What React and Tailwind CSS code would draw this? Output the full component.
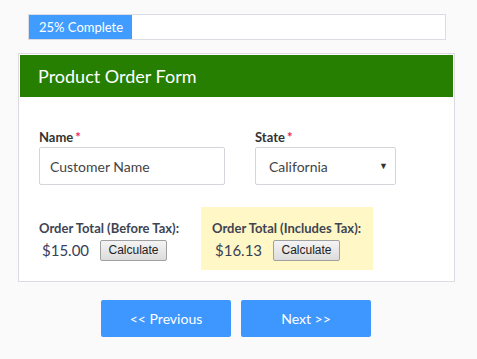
export default function App() {
  const lato = { fontFamily: 'Lato, "Open Sans", sans-serif' }

  return (
    <div className="w-[477px] h-[359px] bg-[#fafafa] pt-[14px]" style={lato}>
      {/* progress */}
      <div className="ml-[28px] w-[418px] h-[26px] border border-[#dcdce2] bg-white flex">
        <div className="w-[103px] h-full bg-[#409cff] text-white text-[13px] leading-[24px] pl-[10px]">
          25% Complete
        </div>
      </div>

      {/* card */}
      <div className="ml-[18px] mt-[13px] w-[437px] h-[229px] border border-[#dcdce2] bg-white p-px">
        <div className="h-[42px] bg-[#267f00] text-white text-[18px] leading-[42px] pl-[18px]">
          Product Order Form
        </div>

        <div className="pl-[19px] pt-[32px] flex gap-[30px]">
          <div className="w-[186px]">
            <label className="block text-[13px] font-bold text-[#333] leading-[16px] mb-[2px]">
              Name<span className="text-[#f0264a] ml-[2px]">*</span>
            </label>
            <input
              type="text"
              defaultValue="Customer Name"
              className="w-[186px] h-[38px] border border-[#d4d4da] rounded-[2px] px-[10px] text-[14px] text-[#444] outline-none"
              style={lato}
            />
          </div>
          <div className="w-[141px]">
            <label className="block text-[13px] font-bold text-[#333] leading-[16px] mb-[2px]">
              State<span className="text-[#f0264a] ml-[2px]">*</span>
            </label>
            <div className="relative w-[141px] h-[38px] border border-[#d4d4da] rounded-[2px] flex items-center pl-[13px] text-[14px] text-[#444]">
              California
              <span className="absolute right-[7px] top-[11px] text-[9px] text-[#333]">▼</span>
            </div>
          </div>
        </div>

        <div className="pl-[19px] mt-[22px] flex items-start">
          <div className="w-[162px] pt-[13px]">
            <div className="text-[13px] font-bold text-[#3e4452] leading-[16px]">Order Total (Before Tax):</div>
            <div className="flex items-center mt-[3px] pl-[3px]">
              <span className="text-[15px] text-[#39405a] w-[58px]">$15.00</span>
              <CalcButton />
            </div>
          </div>
          <div className="w-[172px] h-[63px] bg-[#fff8c6] pl-[11px] pt-[13px]">
            <div className="text-[13px] font-bold text-[#3e4452] leading-[16px]">Order Total (Includes Tax):</div>
            <div className="flex items-center mt-[3px] pl-[3px]">
              <span className="text-[15px] text-[#39405a] w-[58px]">$16.13</span>
              <CalcButton />
            </div>
          </div>
        </div>
      </div>

      {/* nav */}
      <div className="mt-[18px] ml-[101px] flex gap-[10px]">
        <button className="w-[130px] h-[37px] bg-[#3e97ff] text-white text-[14px] rounded-[2px]" style={lato}>
          &lt;&lt; Previous
        </button>
        <button className="w-[130px] h-[37px] bg-[#3e97ff] text-white text-[14px] rounded-[2px]" style={lato}>
          Next &gt;&gt;
        </button>
      </div>
    </div>
  )
}

function CalcButton() {
  return (
    <button
      className="w-[67px] h-[21px] border border-[#a0a0a0] rounded-[2px] bg-gradient-to-b from-[#f4f4f4] to-[#dcdcdc] text-[12px] text-[#222] leading-[19px]"
      style={{ fontFamily: '"Liberation Sans", Arial, sans-serif' }}
    >
      Calculate
    </button>
  )
}
